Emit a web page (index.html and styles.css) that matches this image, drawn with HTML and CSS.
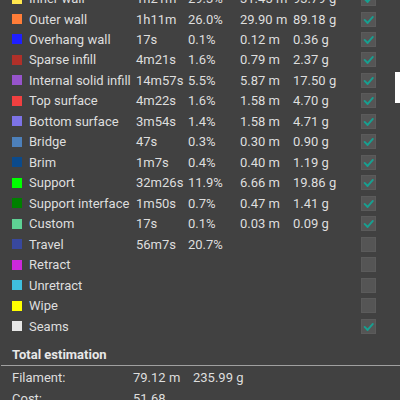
FILE: index.html
```html
<!DOCTYPE html>
<html>
<head>
<meta charset="utf-8">
<link rel="stylesheet" href="styles.css">
</head>
<body>
<div class="panel">
  <div class="rows">
    <div class="row"><span class="sw" style="background:#ffe64d"></span><span>Inner wall</span><span>1h21m</span><span>29.3%</span><span>31.45 m</span><span>93.79 g</span><span class="cb on"><svg viewBox="0 0 15 15"><polyline points="3,8 6.5,11.5 12.5,4.5"/></svg></span></div>
    <div class="row"><span class="sw" style="background:#ff7d38"></span><span>Outer wall</span><span>1h11m</span><span>26.0%</span><span>29.90 m</span><span>89.18 g</span><span class="cb on"><svg viewBox="0 0 15 15"><polyline points="3,8 6.5,11.5 12.5,4.5"/></svg></span></div>
    <div class="row"><span class="sw" style="background:#1f1fff"></span><span>Overhang wall</span><span>17s</span><span>0.1%</span><span>0.12 m</span><span>0.36 g</span><span class="cb on"><svg viewBox="0 0 15 15"><polyline points="3,8 6.5,11.5 12.5,4.5"/></svg></span></div>
    <div class="row"><span class="sw" style="background:#b03029"></span><span>Sparse infill</span><span>4m21s</span><span>1.6%</span><span>0.79 m</span><span>2.37 g</span><span class="cb on"><svg viewBox="0 0 15 15"><polyline points="3,8 6.5,11.5 12.5,4.5"/></svg></span></div>
    <div class="row"><span class="sw" style="background:#9654cc"></span><span>Internal solid infill</span><span>14m57s</span><span>5.5%</span><span>5.87 m</span><span>17.50 g</span><span class="cb on"><svg viewBox="0 0 15 15"><polyline points="3,8 6.5,11.5 12.5,4.5"/></svg></span></div>
    <div class="row"><span class="sw" style="background:#f04040"></span><span>Top surface</span><span>4m22s</span><span>1.6%</span><span>1.58 m</span><span>4.70 g</span><span class="cb on"><svg viewBox="0 0 15 15"><polyline points="3,8 6.5,11.5 12.5,4.5"/></svg></span></div>
    <div class="row"><span class="sw" style="background:#7d73e6"></span><span>Bottom surface</span><span>3m54s</span><span>1.4%</span><span>1.58 m</span><span>4.71 g</span><span class="cb on"><svg viewBox="0 0 15 15"><polyline points="3,8 6.5,11.5 12.5,4.5"/></svg></span></div>
    <div class="row"><span class="sw" style="background:#4d80ba"></span><span>Bridge</span><span>47s</span><span>0.3%</span><span>0.30 m</span><span>0.90 g</span><span class="cb on"><svg viewBox="0 0 15 15"><polyline points="3,8 6.5,11.5 12.5,4.5"/></svg></span></div>
    <div class="row"><span class="sw" style="background:#0b4a8b"></span><span>Brim</span><span>1m7s</span><span>0.4%</span><span>0.40 m</span><span>1.19 g</span><span class="cb on"><svg viewBox="0 0 15 15"><polyline points="3,8 6.5,11.5 12.5,4.5"/></svg></span></div>
    <div class="row"><span class="sw" style="background:#00ff00"></span><span>Support</span><span>32m26s</span><span>11.9%</span><span>6.66 m</span><span>19.86 g</span><span class="cb on"><svg viewBox="0 0 15 15"><polyline points="3,8 6.5,11.5 12.5,4.5"/></svg></span></div>
    <div class="row"><span class="sw" style="background:#008000"></span><span>Support interface</span><span>1m50s</span><span>0.7%</span><span>0.47 m</span><span>1.41 g</span><span class="cb on"><svg viewBox="0 0 15 15"><polyline points="3,8 6.5,11.5 12.5,4.5"/></svg></span></div>
    <div class="row"><span class="sw" style="background:#5ed194"></span><span>Custom</span><span>17s</span><span>0.1%</span><span>0.03 m</span><span>0.09 g</span><span class="cb on"><svg viewBox="0 0 15 15"><polyline points="3,8 6.5,11.5 12.5,4.5"/></svg></span></div>
    <div class="row"><span class="sw" style="background:#38489e"></span><span>Travel</span><span>56m7s</span><span>20.7%</span><span></span><span></span><span class="cb"></span></div>
    <div class="row"><span class="sw" style="background:#cd28dc"></span><span>Retract</span><span></span><span></span><span></span><span></span><span class="cb"></span></div>
    <div class="row"><span class="sw" style="background:#3fbfdf"></span><span>Unretract</span><span></span><span></span><span></span><span></span><span class="cb"></span></div>
    <div class="row"><span class="sw" style="background:#ffff00"></span><span>Wipe</span><span></span><span></span><span></span><span></span><span class="cb"></span></div>
    <div class="row"><span class="sw" style="background:#e6e6e6"></span><span>Seams</span><span></span><span></span><span></span><span></span><span class="cb on"><svg viewBox="0 0 15 15"><polyline points="3,8 6.5,11.5 12.5,4.5"/></svg></span></div>
  </div>
  <div class="total">
    <div class="total-head">Total estimation</div>
    <div class="sep"></div>
    <div class="trow"><span>Filament:</span><span>79.12 m</span><span>235.99 g</span></div>
    <div class="trow"><span>Cost:</span><span>51.68</span><span></span></div>
  </div>
  <div class="edge"></div>
</div>
</body>
</html>
```

FILE: styles.css
```css
html, body {
  margin: 0;
  padding: 0;
  background: #414141;
  overflow: hidden;
}
.panel {
  position: relative;
  width: 400px;
  height: 400px;
  overflow: hidden;
  font-family: Roboto, "Noto Sans", sans-serif;
  font-size: 13px;
  color: #dedede;
}
.rows {
  margin-top: -11.7px;
  display: flex;
  flex-direction: column;
}
.row {
  display: grid;
  grid-template-columns: 17px 107px 52px 52px 53px 68px 15px;
  align-items: center;
  height: 20.47px;
  padding-left: 12px;
  white-space: nowrap;
}
.sw {
  width: 10px;
  height: 10px;
}
.cb {
  width: 15px;
  height: 15px;
  box-sizing: border-box;
  background: #555555;
  border: 1px solid #5b5b5b;
  display: flex;
}
.cb svg {
  width: 13px;
  height: 13px;
}
.cb polyline {
  fill: none;
  stroke: #17a091;
  stroke-width: 2.2;
  stroke-linecap: round;
  stroke-linejoin: round;
}
.total {
  margin-top: 9px;
}
.total-head {
  padding-left: 12px;
  font-weight: bold;
  color: #e8e8e8;
  height: 20px;
  line-height: 20px;
}
.sep {
  margin: 0 0 0 1px;
  height: 1px;
  background: #a0a0a0;
}
.trow {
  display: grid;
  grid-template-columns: 121px 60px 80px;
  padding-left: 12px;
  height: 20.5px;
  line-height: 20.5px;
}
.sep + .trow {
  margin-top: 2px;
}
.edge {
  position: absolute;
  right: 0;
  top: 72px;
  width: 5px;
  height: 31px;
  background: #ffffff;
}
```
